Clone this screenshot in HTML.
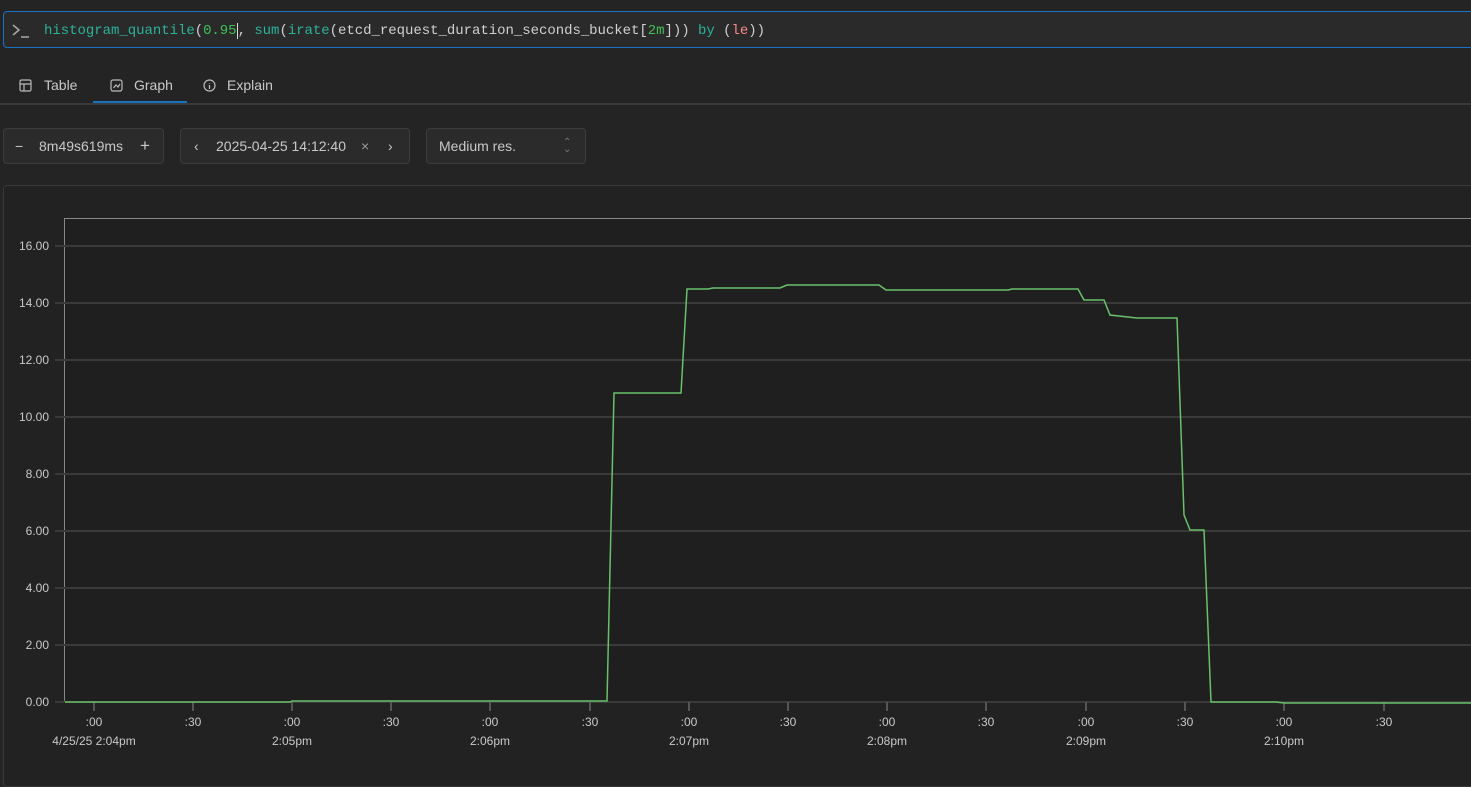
<!DOCTYPE html>
<html><head><style>
body{margin:0;width:1471px;height:766px;background:#242424;overflow:hidden;font-family:"Liberation Sans",sans-serif;color:#c9c9c9;position:relative}
.q{position:absolute;left:3px;top:11px;width:1480px;height:37px;border:1px solid #1971c2;border-radius:4px;background:#2a2a2a;box-sizing:border-box}
.q .t{position:absolute;left:40px;top:11px;font-family:"Liberation Mono",monospace;font-size:14px;color:#d0d0d0;letter-spacing:-0.03px}
.tabs{position:absolute;left:0;top:70px;width:1471px;height:33px;border-bottom:2px solid #3a3a3a}
.tab{position:absolute;top:7px;font-size:14px;color:#c9c9c9}
.ctl{position:absolute;top:128px;height:36px;border:1px solid #3c3c3c;border-radius:4px;background:#2b2b2b;box-sizing:border-box;font-size:14px;color:#c9c9c9}
.ctl span{position:absolute;top:9px}
.panel{position:absolute;left:3px;top:185px;width:1480px;height:600px;border:1px solid #383838;border-radius:4px;background:#222}
</style></head><body>
<div class="q"><svg style="position:absolute;left:8px;top:11px" width="20" height="16"><path d="M1 2l6 5-6 5" stroke="#aaa" stroke-width="1.5" fill="none"/><path d="M9 14h8" stroke="#aaa" stroke-width="1.5"/></svg>
<div class="t"><span style="color:#2bb39a">histogram_quantile</span>(<span style="color:#40c057">0.95</span><span style="border-left:1px solid #ddd"></span>, <span style="color:#2bb39a">sum</span>(<span style="color:#2bb39a">irate</span>(etcd_request_duration_seconds_bucket[<span style="color:#40c057">2m</span>])) <span style="color:#2bb39a">by</span> (<span style="color:#ff8787">le</span>))</div></div>
<div class="tabs">
<svg style="position:absolute;left:19px;top:9px" width="13" height="13"><rect x="1" y="1" width="11" height="11" rx="1.5" stroke="#bbb" fill="none" stroke-width="1.2"/><path d="M1 5h11M5 5v7" stroke="#bbb" stroke-width="1.2"/></svg>
<div class="tab" style="left:44px">Table</div>
<svg style="position:absolute;left:110px;top:9px" width="13" height="13"><rect x="1" y="1" width="11" height="11" rx="2" stroke="#bbb" fill="none" stroke-width="1.2"/><path d="M3.5 9l2.5-3 2 2 2-3" stroke="#bbb" fill="none" stroke-width="1.2"/></svg>
<div class="tab" style="left:134px">Graph</div>
<div style="position:absolute;left:93px;top:31px;width:94px;height:2px;background:#1971c2"></div>
<svg style="position:absolute;left:203px;top:9px" width="13" height="13"><circle cx="6.5" cy="6.5" r="5.5" stroke="#bbb" fill="none" stroke-width="1.2"/><path d="M6.5 6v4M6.5 4v.5" stroke="#bbb" stroke-width="1.3"/></svg>
<div class="tab" style="left:227px">Explain</div>
</div>
<div class="ctl" style="left:3px;width:161px"><span style="left:11px">−</span><span style="left:35px">8m49s619ms</span><span style="left:136px;font-size:17px;top:7px">+</span></div>
<div class="ctl" style="left:180px;width:230px"><span style="left:13px">‹</span><span style="left:35px">2025-04-25 14:12:40</span><span style="left:180px;color:#999">×</span><span style="left:207px">›</span></div>
<div class="ctl" style="left:426px;width:160px"><span style="left:12px">Medium res.</span><span style="left:136px;color:#777;font-size:10px;top:10px;line-height:7px">⌃<br>⌄</span></div>
<div class="panel"></div>
<svg style="position:absolute;left:0;top:0" width="1471" height="766">
<rect x="64.5" y="218.5" width="1420" height="483" fill="#1f1f1f" stroke="#888"/>
<g stroke="#3a3a3a" stroke-width="2">
<line x1="55" x2="1471" y1="246" y2="246"/><line x1="55" x2="1471" y1="303" y2="303"/><line x1="55" x2="1471" y1="360" y2="360"/><line x1="55" x2="1471" y1="417" y2="417"/><line x1="55" x2="1471" y1="474" y2="474"/><line x1="55" x2="1471" y1="531" y2="531"/><line x1="55" x2="1471" y1="588" y2="588"/><line x1="55" x2="1471" y1="645" y2="645"/><line x1="55" x2="1471" y1="702" y2="702"/>
</g>
<g stroke="#555" stroke-width="2"><path d="M94 702v9M193 702v9M292 702v9M391 702v9M490 702v9M590 702v9M689 702v9M788 702v9M887 702v9M986 702v9M1086 702v9M1185 702v9M1284 702v9M1384 702v9"/></g>
<g fill="#c9c9c9" font-size="12" text-anchor="end" font-family="Liberation Sans">
<text x="49" y="250">16.00</text><text x="49" y="307">14.00</text><text x="49" y="364">12.00</text><text x="49" y="421">10.00</text><text x="49" y="478">8.00</text><text x="49" y="535">6.00</text><text x="49" y="592">4.00</text><text x="49" y="649">2.00</text><text x="49" y="706">0.00</text></g>
<g fill="#c9c9c9" font-size="12" text-anchor="middle" font-family="Liberation Sans">
<text x="94" y="726">:00</text><text x="193" y="726">:30</text><text x="292" y="726">:00</text><text x="391" y="726">:30</text><text x="490" y="726">:00</text><text x="590" y="726">:30</text><text x="689" y="726">:00</text><text x="788" y="726">:30</text><text x="887" y="726">:00</text><text x="986" y="726">:30</text><text x="1086" y="726">:00</text><text x="1185" y="726">:30</text><text x="1284" y="726">:00</text><text x="1384" y="726">:30</text>
<text x="94" y="745">4/25/25 2:04pm</text><text x="292" y="745">2:05pm</text><text x="490" y="745">2:06pm</text><text x="689" y="745">2:07pm</text><text x="887" y="745">2:08pm</text><text x="1086" y="745">2:09pm</text><text x="1284" y="745">2:10pm</text></g>
<polyline fill="none" stroke="#69c16a" stroke-width="1.5" points="65,702 290,702 292,701 607,701 614,393 681,393 687,289 708,289 713,288 780,288 787,285 879,285 886,290 1008,290 1012,289 1078,289 1084,300 1104,300 1110,315 1137,318 1177,318 1184,515 1190,530 1204,530 1211,702 1276,702 1284,703 1471,703"/>
</svg>
</body></html>
